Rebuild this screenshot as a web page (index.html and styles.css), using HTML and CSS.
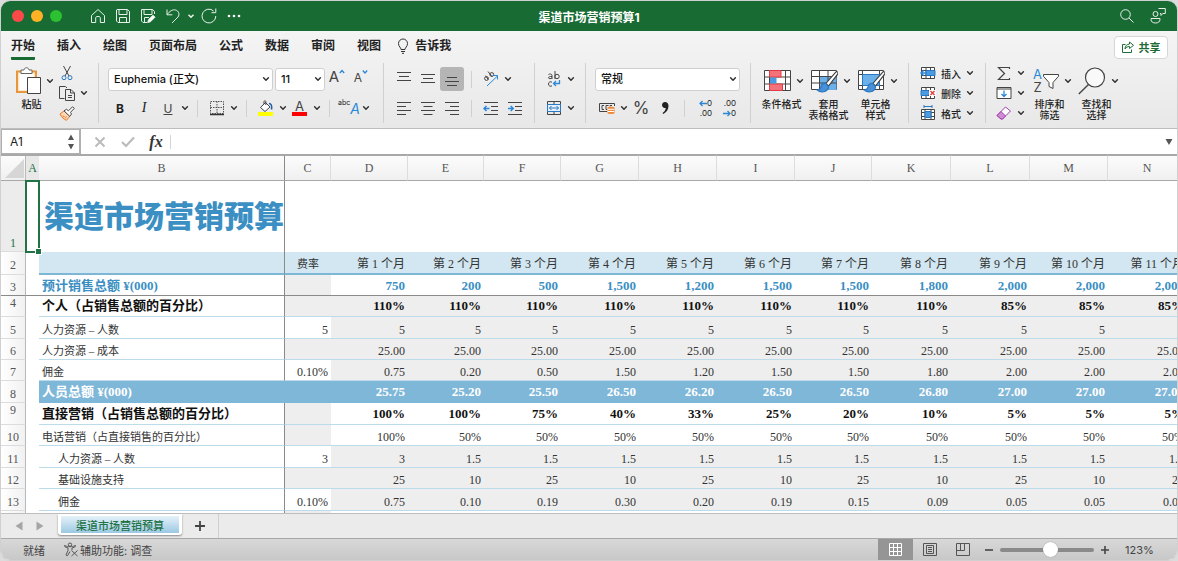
FILE: index.html
```html
<!DOCTYPE html>
<html lang="zh-CN">
<head>
    <meta charset="UTF-8">
    <meta name="viewport" content="width=device-width, initial-scale=1.0">
    <title>渠道市场营销预算1</title>
    <link rel="stylesheet" href="styles.css">
</head>
<body>
    <!-- Shared icons -->
    <svg class="sprite" aria-hidden="true">
        <symbol id="chev" viewBox="0 0 10 10"><path d="M2.6 3.8 5 6.2 7.4 3.8" fill="none" stroke="#333" stroke-width="1.5" stroke-linecap="round" stroke-linejoin="round"/></symbol>
        <symbol id="brush" viewBox="0 0 20 20"><path d="M18.6 1.2c.8.6.6 1.3.2 2L11 13.4 8.6 11.3 17 1.6c.5-.6 1-.8 1.6-.4z" fill="#fff" stroke="#444"/><path d="M8.4 11.2c-2.2-.2-3.7 1.1-4 3.1-.2 1.5-1.4 2.4-3.4 2.7 2.8 2.3 9 2.5 10-2.7z" fill="#4a90d9" stroke="#2b78c2"/></symbol>
    </svg>

    <div class="window">
        <header class="titlebar">
            <div class="lights"><span class="red"></span><span class="yellow"></span><span class="green"></span></div>
            <div class="quick">
                <button aria-label="主页"><svg width="16" height="16" viewBox="0 0 16 16"><path d="M1.5 7.5 8 1.5l6.500 6v7h-4.200V9.800c0-1-.8-1.300-2.300-1.300s-2.300.3-2.300 1.300v4.700H1.500z"/></svg></button>
                <button aria-label="保存"><svg width="16" height="16" viewBox="0 0 16 16"><path d="M2 1.500h10.500l2 2v11H3l-1.500-1.500V2zM4 1.500v5h8v-5M4.500 14.500v-5h7v5"/></svg></button>
                <button aria-label="另存为"><svg width="16" height="16" viewBox="0 0 16 16"><path d="M7 14.500H3l-1.500-1.500V1.500h11l2 2V6M4 1.500v5h8v-5M4.500 14.500v-5H9"/><path d="M8.500 11.700 13 7.200l2 2-4.500 4.500-2.800.8z" fill="#fff"/></svg></button>
                <button aria-label="撤消"><svg width="16" height="16" viewBox="0 0 16 16"><path d="M2 1.500v5.300h5.300M2.200 6.600C4.700 3 7.500 1.300 10.500 2c3.200.8 4.500 4.300 2.500 7l-6 6"/></svg></button>
                <button class="narrow" aria-label="撤消选项"><svg width="10" height="10" viewBox="0 0 10 10"><path d="M2.500 3.800 5 6.300l2.500-2.500" stroke-width="1.500"/></svg></button>
                <button aria-label="恢复"><svg width="18" height="18" viewBox="0 0 18 18"><path d="M15.800 9A6.900 6.900 0 1 1 13.600 4M15.800 1.500v4.200h-4.300"/></svg></button>
                <button aria-label="更多"><svg width="14" height="6" viewBox="0 0 14 6"><g class="solid"><circle cx="2" cy="3" r="1.300"/><circle cx="7" cy="3" r="1.300"/><circle cx="12" cy="3" r="1.300"/></g></svg></button>
            </div>
            <h1>渠道市场营销预算1</h1>
            <div class="quick right">
                <button aria-label="搜索"><svg width="16" height="16" viewBox="0 0 16 16"><circle cx="6.500" cy="6.500" r="4.800"/><path d="m10 10 4.500 4.500"/></svg></button>
                <button aria-label="协作"><svg width="18" height="18" viewBox="0 0 18 18"><circle cx="6.500" cy="7" r="2.500"/><path d="M2 11.500h9v.8c0 2.500-1.800 3.700-4.500 3.700S2 14.800 2 12.300zM9.500 1.500h6.800v5h-2.500l-1.800 2v-2H11"/></svg></button>
            </div>
        </header>

        <div class="ribbon">
            <nav class="tabs">
                <a href="#" class="active">开始</a>
                <a href="#">插入</a>
                <a href="#">绘图</a>
                <a href="#">页面布局</a>
                <a href="#">公式</a>
                <a href="#">数据</a>
                <a href="#">审阅</a>
                <a href="#">视图</a>
                <a href="#" class="tell"><svg width="12" height="16" viewBox="0 0 12 16" fill="none" stroke="#333"><path d="M4 11.500c0-2-2.500-2.800-2.500-6a4.500 4.500 0 0 1 9 0c0 3.200-2.500 4-2.500 6zM4 13.500h4M5 15.300h2"/></svg>告诉我</a>
                <button class="share"><svg width="12" height="12" viewBox="0 0 12 12" fill="none" stroke="#1e6b36"><path d="M3.500 3.500h-3v8h9V8.500M7.500 1l4 3.300-4 3.200V5.500C5.500 5.400 4 6.300 3 8c.1-3 1.800-4.800 4.500-5z"/></svg>共享</button>
            </nav>

            <div class="groups">
                <section class="group clipboard">
                    <button class="big paste">
                        <span class="pic"><svg width="26" height="30" viewBox="0 0 26 30"><path d="M2 5.500h19V26H2z" fill="#fce8cf" stroke="#e8963c" stroke-width="2"/><path d="M4.500 8h14v16h-14z" fill="#fff"/><path d="M6 7.500V4h3c.3-3 4.700-3 5 0h3v3.500z" fill="#fff" stroke="#666"/><path d="M12.500 11.500h13v16h-13z" fill="#fff" stroke="#444"/></svg><svg class="chev"><use href="#chev"/></svg></span>
                        <span class="label">粘贴</span>
                    </button>
                    <div class="stack">
                        <div class="row"><button class="tool" aria-label="剪切"><svg width="12" height="16" viewBox="0 0 12 16" fill="none"><path d="M2.500 1 8 11M9.500 1 4 11" stroke="#444"/><circle cx="3" cy="12.700" r="2" stroke="#2b78c2"/><circle cx="9" cy="12.700" r="2" stroke="#2b78c2"/></svg></button></div>
                        <div class="row"><button class="tool" aria-label="复制"><svg width="16" height="16" viewBox="0 0 16 16" fill="none" stroke="#444"><path d="M5.500 13.500h-5v-12h6l1.500 1.500M6.500 4.500h5.500l3.500 3.500v7.500h-9zM11.500 4.500V8h4M9 10.500h4M9 12.500h4"/></svg></button><svg class="chev"><use href="#chev"/></svg></div>
                        <div class="row"><button class="tool" aria-label="格式刷"><svg width="16" height="15" viewBox="0 0 16 15"><path d="m1 8 4-3 6 5-3.500 4.300c-2.500-.8-5-3-6.500-6.300z" fill="#fbd9b5" stroke="#e8762c"/><path d="m3.500 10 2 .5M6 12.500l1.500-2" stroke="#e8762c"/><path d="m5 4.800 2.500-1.500 2 1.500 4-4 1.800 1.500-3.800 4 1 1.800-1.800 2.200z" fill="#fff" stroke="#444"/></svg></button></div>
                    </div>
                </section>

                <section class="group font">
                    <div class="row">
                        <label class="pick family"><select aria-label="字体"><option>Euphemia (正文)</option></select><svg class="chev"><use href="#chev"/></svg></label>
                        <label class="pick size"><select aria-label="字号"><option>11</option></select><svg class="chev"><use href="#chev"/></svg></label>
                        <button class="tool grow" aria-label="增大字号"><span class="glyph">A</span><svg width="6" height="6" viewBox="0 0 6 6"><path d="M.8 4 3 1.500 5.200 4" fill="none" stroke="#2b88d8" stroke-width="1.300"/></svg></button>
                        <button class="tool grow small" aria-label="减小字号"><span class="glyph">A</span><svg width="6" height="6" viewBox="0 0 6 6"><path d="M.8 1.500 3 4l2.200-2.500" fill="none" stroke="#2b88d8" stroke-width="1.300"/></svg></button>
                    </div>
                    <div class="row">
                        <button class="tool bold">B</button>
                        <button class="tool italic">I</button>
                        <button class="tool underline">U</button><svg class="chev"><use href="#chev"/></svg>
                        <i class="sep"></i>
                        <button class="tool" aria-label="边框"><svg width="16" height="16" viewBox="0 0 16 16" fill="none"><path d="M1.500 1.500h13v12h-13zM8 1.500v12M1.500 7.500h13" stroke="#555" stroke-dasharray="1.500 1"/><path d="M1 14.500h14" stroke="#333" stroke-width="1.500"/></svg></button><svg class="chev"><use href="#chev"/></svg>
                        <i class="sep"></i>
                        <button class="tool" aria-label="填充颜色"><svg width="16" height="16" viewBox="0 0 16 16"><path d="m2.500 7.500 5-5 4.500 4.500-5 4.500zM6 4V1.500c0-1 1.800-1 1.800 0V5" fill="#fff" stroke="#444"/><path d="M11 3.500c2 0 3.200 2 2.500 6" fill="none" stroke="#1f5fa8" stroke-width="1.600"/><path d="M0 12h15v4H0z" fill="#ff0"/></svg></button><svg class="chev"><use href="#chev"/></svg>
                        <button class="tool fontcolor" aria-label="字体颜色">A</button><svg class="chev"><use href="#chev"/></svg>
                        <i class="sep"></i>
                        <button class="tool phonetic" aria-label="拼音"><span>abc</span><b>A</b></button><svg class="chev"><use href="#chev"/></svg>
                    </div>
                </section>

                <section class="group align">
                    <div class="row">
                        <button class="tool" aria-label="顶端对齐"><svg width="14" height="16" viewBox="0 0 14 16" stroke="#444"><path d="M0 1.500h14M2 5.500h10M0 9.500h14"/></svg></button>
                        <button class="tool" aria-label="垂直居中"><svg width="14" height="16" viewBox="0 0 14 16" stroke="#444"><path d="M0 3.500h14M2 7.500h10M0 11.500h14"/></svg></button>
                        <button class="tool on" aria-label="底端对齐"><svg width="14" height="16" viewBox="0 0 14 16" stroke="#444"><path d="M2 6.500h10M0 10.500h14M2 14.500h10"/></svg></button>
                        <i class="sep"></i>
                        <button class="tool" aria-label="方向"><svg width="18" height="18" viewBox="0 0 18 18" fill="none"><g stroke="#444"><circle cx="4.500" cy="8.500" r="1.900"/><path d="m3.500 5.700 2.700 3.800M6 1.500l4 5"/><circle cx="9.800" cy="4.500" r="1.900"/></g><path d="m5 16 10.500-10M11.500 5.500h4v4" stroke="#2b88d8"/></svg></button><svg class="chev"><use href="#chev"/></svg>
                    </div>
                    <div class="row">
                        <button class="tool" aria-label="左对齐"><svg width="14" height="14" viewBox="0 0 14 14" stroke="#444"><path d="M0 1.500h14M0 5.500h9M0 9.500h14M0 13.500h9"/></svg></button>
                        <button class="tool" aria-label="居中"><svg width="14" height="14" viewBox="0 0 14 14" stroke="#444"><path d="M0 1.500h14M2.500 5.500h9M0 9.500h14M2.500 13.500h9"/></svg></button>
                        <button class="tool" aria-label="右对齐"><svg width="14" height="14" viewBox="0 0 14 14" stroke="#444"><path d="M0 1.500h14M5 5.500h9M0 9.500h14M5 13.500h9"/></svg></button>
                        <i class="sep"></i>
                        <button class="tool" aria-label="减少缩进"><svg width="16" height="14" viewBox="0 0 16 14" fill="none" stroke="#444"><path d="M1 1.500h14M8 5.500h7M8 9.500h7M1 13.500h14"/><path d="M6.500 7.500H1.500M3.500 5 1 7.500 3.500 10" stroke="#2b88d8" stroke-width="1.500"/></svg></button>
                        <button class="tool" aria-label="增加缩进"><svg width="16" height="14" viewBox="0 0 16 14" fill="none" stroke="#444"><path d="M1 1.500h14M8 5.500h7M8 9.500h7M1 13.500h14"/><path d="M1 7.500h5M3.700 5l2.500 2.500L3.700 10" stroke="#2b88d8" stroke-width="1.500"/></svg></button>
                    </div>
                </section>

                <section class="group wrap">
                    <div class="row"><button class="tool" aria-label="自动换行"><svg width="16" height="18" viewBox="0 0 16 18" fill="none"><g stroke="#444"><path d="M2.500 4.500c1-.8 3.500-.7 3.500 1V9M6 6.500c-2-.2-3.500.2-3.500 1.300S5 9 6 7.800M9 1v8"/><circle cx="11" cy="6.500" r="2.200"/><path d="M6 12.200c-1.500-1-3.500-.3-3.500 1.800s2 2.800 3.500 1.800"/></g><path d="M13.500 10v3.500H7.500M10 11l-2.500 2.500L10 16" stroke="#2b88d8" stroke-width="1.300"/></svg></button><svg class="chev"><use href="#chev"/></svg></div>
                    <div class="row"><button class="tool" aria-label="合并后居中"><svg width="16" height="15" viewBox="0 0 16 15" fill="none"><path d="M1.500.5h13v13h-13zM8 .5v3M8 11v3" stroke="#444"/><path d="M1.500 3.500h13v7h-13z" fill="#e4f0fb" stroke="#2b78c2"/><path d="M3.500 7h9M5.500 5 3.500 7l2 2M10.500 5l2 2-2 2" stroke="#2b78c2"/></svg></button><svg class="chev"><use href="#chev"/></svg></div>
                </section>

                <section class="group number">
                    <div class="row"><label class="pick format"><select aria-label="数字格式"><option>常规</option></select><svg class="chev"><use href="#chev"/></svg></label></div>
                    <div class="row">
                        <button class="tool" aria-label="货币"><svg width="17" height="14" viewBox="0 0 17 14" fill="none"><path d="M8 10.500H.5v-8h15V5" stroke="#444"/><path d="M5 4.500H3v4h2M9.500 4.500H7v4h1M13 4.500h-2v1" stroke="#444"/><path d="M8.500 6.500c0-1 7-1 7 0v5.500c0 1.300-7 1.300-7 0z" fill="#f08a3c"/><path d="M9 8.300h6M9 10.500h6" stroke="#fff"/></svg></button><svg class="chev"><use href="#chev"/></svg>
                        <button class="tool percent">%</button>
                        <button class="tool comma" aria-label="千位分隔"><svg width="10" height="14" viewBox="0 0 10 14"><path d="M5 1a3 3 0 1 0 .8 5.900C5.500 9 4.300 10.800 2.500 12l.7 1C6.500 11.400 8.500 8.500 8.500 5 8.500 2.500 7 1 5 1z" fill="#222"/></svg></button>
                        <i class="sep"></i>
                        <button class="tool decimals" aria-label="增加小数位数"><span><svg width="8" height="7" viewBox="0 0 8 7"><path d="M8 3.500H1M3.500 1 1 3.500 3.500 6" fill="none" stroke="#2b88d8" stroke-width="1.300"/></svg>0</span><span>.00</span></button>
                        <button class="tool decimals" aria-label="减少小数位数"><span>.00</span><span><svg width="8" height="7" viewBox="0 0 8 7"><path d="M0 3.500h7M4.500 1 7 3.500 4.500 6" fill="none" stroke="#2b88d8" stroke-width="1.300"/></svg>0</span></button>
                    </div>
                </section>

                <section class="group styles">
                    <button class="big">
                        <span class="pic"><svg width="28" height="26" viewBox="0 0 28 26"><path d="M1.500 2.500h26v20h-26z" fill="#fff" stroke="#444"/><path d="M6.500 2.500v20M22.500 2.500v20M1.500 9h26M1.500 16h26" stroke="#444"/><path d="M6.500 2.500H18V9H6.500zM6.500 16h13v6.500h-13z" fill="#f4737b" stroke="#e23a45"/><path d="M7 9.500h6.500v6H7z" fill="#4a9be0"/></svg><svg class="chev"><use href="#chev"/></svg></span>
                        <span class="label">条件格式</span>
                    </button>
                    <button class="big">
                        <span class="pic"><svg width="28" height="26" viewBox="0 0 28 26"><path d="M1.500 2.500h25v19h-25z" fill="#fff" stroke="#444"/><path d="M10 9h16.500v13H10z" fill="#6cb0ea"/><path d="M9.500 2.500v19M18 2.500v19M1.500 8.500h25M1.500 15h25" stroke="#444"/><use href="#brush" x="6" y="2" width="23" height="24"/></svg><svg class="chev"><use href="#chev"/></svg></span>
                        <span class="label">套用<br>表格格式</span>
                    </button>
                    <button class="big">
                        <span class="pic"><svg width="28" height="26" viewBox="0 0 28 26"><path d="M1.500 2.500h25v19h-25z" fill="#fff" stroke="#444"/><path d="M5.500 2.500v19M22.500 2.500v19M1.500 6.500h25M1.500 17.500h25" stroke="#444"/><path d="M5.500 6.500h17v11h-17z" fill="#6cb0ea" stroke="#2b78c2"/><use href="#brush" x="6" y="2" width="23" height="24"/></svg><svg class="chev"><use href="#chev"/></svg></span>
                        <span class="label">单元格<br>样式</span>
                    </button>
                </section>

                <section class="group cells">
                    <div class="stack">
                        <div class="row"><button class="tool named"><svg width="16" height="14" viewBox="0 0 16 14"><path d="M1.500 1.500h13v11h-13zM6 1.500v11M10.500 1.500v11M1.500 4.500h13M1.500 9.500h13" fill="#fff" stroke="#444"/><path d="M6 4.500h9v5H6z" fill="#4a9be0" stroke="#2b78c2"/><path d="M7 7H1M3.500 4.500 1 7l2.500 2.500" fill="none" stroke="#2b88d8" stroke-width="1.500"/></svg>插入</button><svg class="chev"><use href="#chev"/></svg></div>
                        <div class="row"><button class="tool named"><svg width="16" height="14" viewBox="0 0 16 14"><path d="M1.500 1.500h13v11h-13zM6 1.500v11M10.500 1.500v11M1.500 4.500h13M1.500 9.500h13" fill="#fff" stroke="#444"/><path d="M1 4.500h7l2 2.500-2 2.500H1z" fill="#4a9be0" stroke="#2b78c2"/><path d="M9 4h7v6H9z" fill="#fff"/><path d="m10.500 5 4 4M14.500 5l-4 4" stroke="#e03c3c" stroke-width="1.400"/></svg>删除</button><svg class="chev"><use href="#chev"/></svg></div>
                        <div class="row"><button class="tool named"><svg width="16" height="16" viewBox="0 0 16 16"><path d="M1.500 4.500h13v10h-13zM5 4.500v10M11 4.500v10M1.500 7.500h13M1.500 11.500h13" fill="#fff" stroke="#444"/><path d="M5 6.500h6v6H5z" fill="#4a9be0" stroke="#2b78c2"/><path d="M4 1.500h8M4 0v3M12 0v3" stroke="#2b78c2"/></svg>格式</button><svg class="chev"><use href="#chev"/></svg></div>
                    </div>
                </section>

                <section class="group edit">
                    <div class="stack">
                        <div class="row"><button class="tool" aria-label="求和"><svg width="14" height="15" viewBox="0 0 14 15"><path d="M12.500 3V1.500h-11l6 6-6 6h11V12" fill="none" stroke="#444" stroke-width="1.200"/></svg></button><svg class="chev"><use href="#chev"/></svg></div>
                        <div class="row"><button class="tool" aria-label="填充"><svg width="16" height="14" viewBox="0 0 16 14" fill="none"><path d="M1 1.500h14v11H1z" fill="#fff" stroke="#444"/><path d="M1 3h14" stroke="#444"/><path d="M8 4.500v6M5.500 8 8 10.500 10.500 8" stroke="#2b88d8" stroke-width="1.300"/></svg></button><svg class="chev"><use href="#chev"/></svg></div>
                        <div class="row"><button class="tool" aria-label="清除"><svg width="16" height="14" viewBox="0 0 16 14"><path d="M9.500 1 14.500 5 6.500 13H5L1 9.500z" fill="#fff" stroke="#a23bab"/><path d="M5 5.500 9.500 10l-3 3H5L1 9.500z" fill="#cd8fd2" stroke="#a23bab"/></svg></button><svg class="chev"><use href="#chev"/></svg></div>
                    </div>
                    <button class="big">
                        <span class="pic sort"><span class="az"><i>A</i><i>Z</i></span><svg width="18" height="18" viewBox="0 0 18 18"><path d="M1.500 2.500h15v1.800L11 10.500v6l-4-2v-4L1.500 4.300z" fill="#fff" stroke="#444"/></svg><svg class="chev"><use href="#chev"/></svg></span>
                        <span class="label">排序和<br>筛选</span>
                    </button>
                    <button class="big">
                        <span class="pic"><svg width="28" height="30" viewBox="0 0 28 30"><circle cx="17" cy="11.500" r="9.500" fill="#f9f9f9" stroke="#444" stroke-width="1.200"/><path d="M10.500 18.500.8 28" stroke="#444" stroke-width="1.400"/></svg><svg class="chev"><use href="#chev"/></svg></span>
                        <span class="label">查找和<br>选择</span>
                    </button>
                </section>
            </div>
        </div>

        <div class="formula-bar">
            <label class="name-box"><input value="A1" aria-label="名称框"><svg width="8" height="18" viewBox="0 0 8 18"><path d="M1 7 4 1.500 7 7zM1 11l3 5.500L7 11z" fill="#555"/></svg></label>
            <button aria-label="取消"><svg width="12" height="12" viewBox="0 0 12 12"><path d="m1.500 1.500 9 9M10.500 1.500l-9 9" stroke="#bbb" stroke-width="2"/></svg></button>
            <button aria-label="输入"><svg width="14" height="12" viewBox="0 0 14 12"><path d="m1 6 4 4 8-8.500" fill="none" stroke="#bbb" stroke-width="2.200"/></svg></button>
            <button class="fx">fx</button>
            <input class="formula" aria-label="编辑栏">
            <button aria-label="展开编辑栏"><svg width="8" height="8" viewBox="0 0 8 8"><path d="M.5 1h7L4 7z" fill="#555"/></svg></button>
        </div>

        <main class="sheet">
            <table id="grid"></table>
        </main>

        <footer class="sheet-tabs">
            <button aria-label="上一张"><svg width="8" height="10" viewBox="0 0 8 10"><path d="M7.500.5v9L.5 5z" fill="#a5a5a5"/></svg></button>
            <button aria-label="下一张"><svg width="8" height="10" viewBox="0 0 8 10"><path d="M.5.5v9l7-4.500z" fill="#a5a5a5"/></svg></button>
            <a href="#" class="sheet-tab"><span>渠道市场营销预算</span></a>
            <button class="add" aria-label="新建工作表"><svg width="10" height="10" viewBox="0 0 10 10"><path d="M5 0v10M0 5h10" stroke="#444" stroke-width="1.800"/></svg></button>
        </footer>

        <div class="status">
            <span class="ready">就绪</span>
            <svg width="16" height="15" viewBox="0 0 16 15" fill="none" stroke="#555"><circle cx="7" cy="2.700" r="1.700"/><path d="M1.500 3.500C1 4.500 2 5 5 6v2.500L3 13c.5 1 1.500 1 2 0l2-3.500M1.500 3.500C4 4.500 5 4.700 7 4.700s3-.2 5.500-1.200c.7 1-.5 1.500-3.500 2.500v2M8.500 8.500l6 5.500M14.500 8.500l-6 5.500"/></svg>
            <span>辅助功能: 调查</span>
            <div class="views">
                <button class="on" aria-label="普通"><svg width="13" height="13" viewBox="0 0 13 13"><path d="M.5.500h12v12H.5zM4.500.5v12M8.500.5v12M.5 4.500h12M.5 8.500h12" fill="none" stroke="#fff"/></svg></button>
                <button aria-label="页面布局"><svg width="14" height="13" viewBox="0 0 14 13" fill="none" stroke="#555"><path d="M.5.500h13v12H.5zM3.500 2.500h7v8h-7zM5 4.500h4M5 6.500h4M5 8.500h4"/></svg></button>
                <button aria-label="分页预览"><svg width="14" height="13" viewBox="0 0 14 13" fill="none" stroke="#555"><path d="M.5.500h13v12H.5zM4.500.5v7M8.500.5v7M.5 7.500h8"/></svg></button>
            </div>
            <button class="zoom" aria-label="缩小"><svg width="8" height="8" viewBox="0 0 8 8"><path d="M0 4h8" stroke="#444" stroke-width="1.600"/></svg></button>
            <input type="range" min="0" max="100" value="54" aria-label="缩放">
            <button class="zoom" aria-label="放大"><svg width="8" height="8" viewBox="0 0 8 8"><path d="M0 4h8M4 0v8" stroke="#444" stroke-width="1.600"/></svg></button>
            <span class="level">123%</span>
        </div>
    </div>

    <script>
        const columns = ['A', 'B', 'C', 'D', 'E', 'F', 'G', 'H', 'I', 'J', 'K', 'L', 'M', 'N'];
        const widths = [25, 13, 246, 46, 77, 76, 77, 78, 78, 78, 77, 79, 79, 78, 79];

        // One entry per sheet row: style classes, label, rate, monthly values
        const rows = [
            { style: 'title', label: '渠道市场营销预算', rate: '', values: [] },
            { style: 'months', label: '', rate: '费率', values: Array.from({ length: 11 }, (_, i) => `第 ${i + 1} 个月`) },
            { style: 'sales locked', label: '预计销售总额 ¥(000)', rate: '', values: ['750', '200', '500', '1,500', '1,200', '1,500', '1,500', '1,800', '2,000', '2,000', '2,000'] },
            { style: 'section locked shaded', label: '个人（占销售总额的百分比）', rate: '', values: ['110%', '110%', '110%', '110%', '110%', '110%', '110%', '110%', '85%', '85%', '85%'] },
            { style: 'shaded tall', label: '人力资源 – 人数', rate: '5', values: Array(11).fill('5') },
            { style: 'locked shaded', label: '人力资源 – 成本', rate: '', values: Array(11).fill('25.00') },
            { style: 'shaded', label: '佣金', rate: '0.10%', values: ['0.75', '0.20', '0.50', '1.50', '1.20', '1.50', '1.50', '1.80', '2.00', '2.00', '2.00'] },
            { style: 'total tall', label: '人员总额 ¥(000)', rate: '', values: ['25.75', '25.20', '25.50', '26.50', '26.20', '26.50', '26.50', '26.80', '27.00', '27.00', '27.00'] },
            { style: 'section locked tall', label: '直接营销（占销售总额的百分比）', rate: '', values: ['100%', '100%', '75%', '40%', '33%', '25%', '20%', '10%', '5%', '5%', '5%'] },
            { style: 'locked', label: '电话营销（占直接销售的百分比）', rate: '', values: ['100%'].concat(Array(10).fill('50%')) },
            { style: 'sub shaded tall', label: '人力资源 – 人数', rate: '3', values: ['3'].concat(Array(10).fill('1.5')) },
            { style: 'sub locked shaded', label: '基础设施支持', rate: '', values: ['25', '10', '25', '10', '25', '10', '25', '10', '25', '10', '25'] },
            { style: 'sub shaded tall', label: '佣金', rate: '0.10%', values: ['0.75', '0.10', '0.19', '0.30', '0.20', '0.19', '0.15', '0.09', '0.05', '0.05', '0.05'] },
            { style: 'locked', label: '', rate: '', values: [] }
        ];

        // Build the grid
        function renderGrid() {
            let html = '<colgroup>' + widths.map(w => `<col style="width:${w}px">`).join('') + '</colgroup>';
            html += '<thead><tr><th class="corner"><svg width="20" height="19" viewBox="0 0 20 19"><path d="M20 0v19H1z" fill="#d6d6d6"/></svg></th>';
            html += columns.map(c => `<th class="col-${c.toLowerCase()}">${c}</th>`).join('') + '</tr></thead><tbody>';

            rows.forEach((row, i) => {
                html += `<tr class="${row.style}"><th>${i + 1}</th><td class="a">${i === 0 ? '<span class="selection"></span>' : ''}</td>`;
                html += `<td class="b">${row.label}</td><td class="c">${row.rate}</td>`;
                for (let m = 0; m < 11; m++) {
                    html += `<td>${row.values[m] || ''}</td>`;
                }
                html += '</tr>';
            });
            document.getElementById('grid').innerHTML = html + '</tbody>';
        }

        renderGrid();
    </script>
</body>
</html>
```
FILE: styles.css
```css
* {
    margin: 0;
    padding: 0;
    box-sizing: border-box;
}

body {
    background: #dcdcdc;
    font-family: Inter, "Noto Sans CJK SC", sans-serif;
    font-size: 11px;
    color: #222;
}

button {
    background: none;
    border: none;
    font: inherit;
    color: inherit;
    display: flex;
    align-items: center;
    justify-content: center;
}

a {
    color: inherit;
    text-decoration: none;
}

svg {
    display: block;
    flex: none;
}

.sprite {
    display: none;
}

.window {
    height: 100vh;
    display: flex;
    flex-direction: column;
    border: 1px solid #d0d0d0;
    border-radius: 10px;
    overflow: hidden;
    background: #fff;
}

/* Title bar */
.titlebar {
    flex: none;
    height: 30px;
    display: grid;
    grid-template-columns: 1fr auto 1fr;
    grid-template-areas: "left title right";
    align-items: center;
    background: #196b34;
    color: #fff;
}

.titlebar h1 {
    grid-area: title;
    font-size: 12px;
    font-weight: 700;
}

.lights {
    grid-area: left;
    display: flex;
    gap: 7px;
    padding-left: 11px;
}

.lights span {
    width: 12px;
    height: 12px;
    border-radius: 50%;
}

.lights .red { background: #fc4a48; }
.lights .yellow { background: #fdb124; }
.lights .green { background: #2bc131; }

.quick {
    grid-area: left;
    display: flex;
    align-items: center;
    margin-left: 84px;
}

.quick.right {
    grid-area: right;
    justify-content: flex-end;
    gap: 6px;
    margin: 0;
    padding-right: 7px;
}

.quick button {
    width: 25px;
    height: 24px;
}

.quick .narrow {
    width: 11px;
}

.quick svg {
    fill: none;
    stroke: #e6f0e9;
}

.quick .solid {
    fill: #fff;
    stroke: none;
}

/* Ribbon */
.ribbon {
    flex: none;
    background: linear-gradient(#f4f4f4, #e8e8e8);
    border-bottom: 1px solid #bdbdbd;
    padding-bottom: 5px;
}

.tabs {
    display: flex;
    align-items: center;
    gap: 22px;
    height: 32px;
    padding: 0 9px 0 10px;
    font-size: 12px;
    font-weight: 600;
}

.tabs a {
    height: 26px;
    line-height: 24px;
    border-bottom: 3px solid transparent;
}

.tabs .active {
    border-color: #196b34;
    border-radius: 1px;
}

.tabs .tell {
    display: flex;
    align-items: center;
    gap: 6px;
    margin-left: -6px;
}

.tabs .share {
    margin-left: auto;
    gap: 5px;
    width: 54px;
    height: 23px;
    font-size: 11px;
    font-weight: 700;
    color: #1e6b36;
    background: #fff;
    border: 1px solid #d6d6d6;
    border-radius: 4px;
}

.groups {
    display: flex;
    height: 60px;
}

.group {
    flex: none;
    border-right: 1px solid #d0d0d0;
}

.group:last-child {
    border-right: none;
}

.clipboard, .styles, .edit {
    display: flex;
}

.font, .align, .wrap, .number {
    display: flex;
    flex-direction: column;
    gap: 5px;
    padding-top: 4px;
}

.clipboard { padding: 0 9px 0 7px; }
.font { padding-left: 9px; padding-right: 10px; }
.align { padding-left: 8px; padding-right: 7px; }
.wrap { padding-left: 7px; padding-right: 9px; }
.number { padding-left: 9px; padding-right: 10px; }
.styles { padding: 0 9px 0 7px; }
.cells { padding: 0 10px 0 9px; }
.edit { padding-left: 6px; }

.row {
    display: flex;
    align-items: center;
    height: 24px;
}

.stack .row {
    height: 20px;
}

.tool {
    flex: none;
    width: 24px;
    height: 24px;
}

.stack .tool {
    height: 20px;
}

.tool.on {
    background: #b5b5b5;
    border-radius: 3px;
}

.tool.named {
    width: auto;
    gap: 5px;
    padding: 0 4px 0 2px;
    font-size: 10px;
    font-weight: 500;
}

.chev {
    flex: none;
    width: 10px;
    height: 10px;
}

.sep {
    width: 1px;
    height: 17px;
    margin: 0 7px;
    background: #d0d0d0;
}

.pick {
    display: grid;
    grid-template-columns: 1fr 12px;
    align-items: center;
    height: 23px;
}

.pick select {
    grid-area: 1 / 1 / 2 / 3;
    width: 100%;
    height: 100%;
    padding: 0 14px 0 5px;
    appearance: none;
    font: inherit;
    font-weight: 500;
    color: #111;
    background: #fff;
    border: 1px solid #cfcfcf;
    border-radius: 3px;
}

.pick .chev {
    grid-area: 1 / 2;
    pointer-events: none;
}

.family { width: 165px; margin-right: 2px; }
.size { width: 50px; }
.format { width: 145px; }

.grow {
    align-items: flex-start;
    font-size: 15px;
    line-height: 20px;
    color: #444;
}

.grow svg {
    margin-top: 2px;
}

.grow.small {
    font-size: 12px;
    line-height: 22px;
}

.bold { font-weight: 700; font-size: 12px; }
.italic { font: italic 14px "Liberation Serif", serif; }
.underline { text-decoration: underline; font-size: 12px; color: #444; }

.tool.fontcolor {
    width: 15px;
    height: 16px;
    margin: 0 5px 0 4px;
    font-size: 13px;
    line-height: 11px;
    color: #444;
    border-bottom: 4px solid #f00;
}

.phonetic {
    align-items: flex-start;
    font-size: 7px;
}

.phonetic b {
    font: italic 14px Inter, sans-serif;
    line-height: 26px;
    color: #2b88d8;
}

.phonetic span {
    line-height: 14px;
}

.percent {
    font-size: 17px;
    color: #444;
}

.decimals {
    flex-direction: column;
    align-items: flex-end;
    padding-right: 4px;
    font-size: 8px;
    line-height: 10px;
}

.decimals span {
    display: flex;
    align-items: center;
}

.big {
    flex: none;
    flex-direction: column;
    justify-content: flex-start;
    width: 47px;
    padding-top: 3px;
}

.big .pic {
    display: flex;
    align-items: center;
    justify-content: flex-end;
    gap: 4px;
    width: 47px;
    height: 30px;
}

.big .label {
    margin-top: 3px;
    font-size: 10px;
    font-weight: 500;
    line-height: 11px;
}

.sort.pic {
    gap: 0;
}

.sort .chev {
    margin-left: 3px;
}

.az {
    display: flex;
    flex-direction: column;
    font-size: 13px;
    line-height: 13px;
    color: #444;
}

.az i {
    font-style: normal;
}

.az i:first-child {
    color: #2b88d8;
}

/* Formula bar */
.formula-bar {
    flex: none;
    display: flex;
    align-items: center;
    height: 26px;
    background: #fff;
    border-bottom: 1px solid #a8a8a8;
}

.name-box {
    display: flex;
    align-items: center;
    width: 80px;
    height: 25px;
    padding: 0 4px 0 8px;
    border: 1px solid #b0b0b0;
    border-width: 1px 2px 1px 1px;
    margin-right: 5px;
}

.name-box input {
    width: 100%;
    border: none;
    font: inherit;
    font-size: 12px;
    color: #222;
}

.formula-bar button {
    width: 28px;
    height: 24px;
}

.formula-bar .fx {
    font: italic bold 16px "Liberation Serif", serif;
    color: #333;
}

.formula {
    flex: 1;
    min-width: 0;
    height: 14px;
    border: none;
    border-left: 1px solid #d5d5d5;
    font: inherit;
}

.formula-bar button:last-child {
    width: 16px;
}

/* Sheet */
.sheet {
    flex: 1;
    min-height: 0;
    overflow: hidden;
    border-bottom: 1px solid #bdbdbd;
    font: 11px "Liberation Serif", "Noto Sans CJK SC", serif;
}

table {
    width: 1186px;
    table-layout: fixed;
    border-spacing: 0;
}

thead th {
    height: 26px;
    font-size: 12px;
    font-weight: 400;
    color: #555;
    background: linear-gradient(#fcfcfc, #f0f0f0);
    border-top: 1px solid #a8a8a8;
    border-right: 1px solid #dcdcdc;
    border-bottom: 1px solid #a8a8a8;
}

thead .corner {
    border-right-color: #b8b8b8;
}

.corner svg {
    margin-left: 3px;
}

thead .col-a {
    color: #217346;
    background: #e8e8e8;
    border-bottom-color: #217346;
    border-right: none;
}

thead .col-b,
tbody .b {
    border-right: 1px solid #8a8a8a;
}

tbody th {
    height: 21px;
    padding-bottom: 1px;
    font-size: 12px;
    font-weight: 400;
    line-height: 14px;
    vertical-align: bottom;
    color: #555;
    background: linear-gradient(90deg, #fff, #f1f1f1);
    border-right: 1px solid #b8b8b8;
    border-bottom: 1px solid #dcdcdc;
}

tbody .tall th {
    height: 22px;
}

td {
    padding: 0 3px 1px;
    font-size: 12px;
    line-height: 14px;
    text-align: right;
    vertical-align: bottom;
    white-space: nowrap;
    color: #333;
    background: #fff;
    border-bottom: 1px solid #bcdcec;
}

.b {
    text-align: left;
    font-size: 11px;
}

.shaded td,
.locked .c {
    background: #eee;
}

.shaded .b,
.shaded:not(.locked) .c {
    background: #fff;
}

.sub .b {
    padding-left: 19px;
}

.title th {
    height: 71px;
    color: #217346;
    background: #ececec;
    padding-bottom: 1px;
}

.title td {
    border-bottom: none;
}

.title .b {
    padding: 0 0 0 5px;
    font-size: 30px;
    font-weight: 900;
    line-height: 36px;
    vertical-align: middle;
    color: #3b8fc3;
}

.months th {
    height: 23px;
    padding-bottom: 2px;
}

.months td {
    padding-bottom: 2px;
    background: #d2e7f1;
    border-bottom: 2px solid #7eb6d6;
}

.months .c {
    font-size: 11px;
    text-align: center;
}

.sales td {
    font-size: 13px;
    font-weight: 700;
    color: #3b8fc3;
    padding-bottom: 2px;
}

.section th {
    vertical-align: top;
}

.section td {
    font-size: 13px;
    font-weight: 700;
    color: #111;
    padding-bottom: 3px;
}

.total td {
    font-size: 13px;
    font-weight: 700;
    color: #fff;
    background: #7fb7d8;
    border-color: #7fb7d8;
    padding-bottom: 3px;
}

tbody tr .a {
    position: relative;
    padding: 0;
    background: #fff;
    border-bottom: none;
}

/* Edge of the frozen pane */
tbody .sales th,
tbody .sales td {
    border-bottom: 1px solid #8a8a8a;
}

/* Selected cell */
.selection {
    position: absolute;
    inset: -1px;
    border: 2px solid #217346;
    z-index: 1;
}

.selection::after {
    content: "";
    position: absolute;
    right: -3px;
    bottom: -3px;
    width: 5px;
    height: 5px;
    background: #217346;
    outline: 1px solid #fff;
}

/* Sheet tabs */
.sheet-tabs {
    flex: none;
    display: flex;
    height: 24px;
    padding-left: 7px;
    background: #ebebeb;
}

.sheet-tabs button {
    width: 21px;
}

.sheet-tab {
    height: 21px;
    margin-left: 8px;
    padding: 2px 3px;
    background: #fff;
    border-radius: 0 0 3px 3px;
    box-shadow: 0 1px 2px #888;
}

.sheet-tab span {
    display: block;
    height: 17px;
    padding: 0 15px;
    font-size: 11px;
    font-weight: 500;
    line-height: 20px;
    color: #217346;
    background: linear-gradient(#e6f2f9, #9cc8e2);
}

.sheet-tabs .add {
    width: 37px;
    border-right: 1px solid #cfcfcf;
}

/* Status bar */
.status {
    flex: none;
    display: flex;
    align-items: center;
    height: 22px;
    padding-left: 22px;
    color: #444;
    background: linear-gradient(#d8d8d8, #c8c8c8);
    border-top: 1px solid #a8a8a8;
}

.ready {
    margin-right: 18px;
}

.status svg + span {
    margin-left: 1px;
}

.views {
    display: flex;
    align-self: stretch;
    margin-left: auto;
    margin-right: 3px;
}

.views button {
    width: 33px;
}

.views .on {
    width: 35px;
    background: #959595;
}

.zoom {
    width: 14px;
    height: 20px;
}

.status input {
    width: 94px;
    height: 16px;
    margin: 0 4px;
    appearance: none;
    background: none;
}

.status input::-webkit-slider-runnable-track {
    height: 4px;
    border-radius: 2px;
    background: #8a8a8a;
}

.status input::-webkit-slider-thumb {
    appearance: none;
    width: 15px;
    height: 15px;
    margin-top: -6px;
    border-radius: 50%;
    background: #fff;
    box-shadow: 0 0 1px #777;
}

.level {
    width: 65px;
    padding-left: 13px;
    font-size: 11px;
}
```
